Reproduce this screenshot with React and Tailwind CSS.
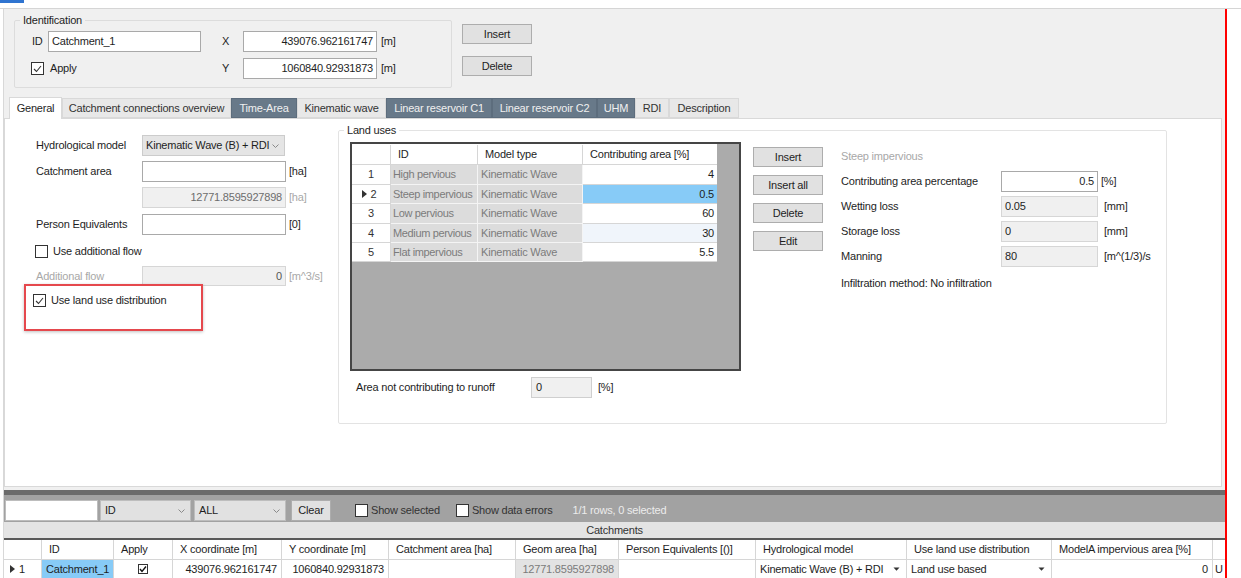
import React from "react";

const Chk = ({ checked }) => (
  <span className="inline-flex w-[13px] h-[13px] shrink-0 items-center justify-center border border-[#333333] bg-white">
    {checked && (
      <svg width="9" height="8" viewBox="0 0 9 8">
        <polyline points="1,4 3.5,6.5 8,1" fill="none" stroke="#333" strokeWidth="1.1" />
      </svg>
    )}
  </span>
);

const Chev = () => (
  <svg width="7" height="4" viewBox="0 0 7 4" className="shrink-0">
    <polyline points="0.5,0.5 3.5,3.5 6.5,0.5" fill="none" stroke="#8a8a8a" strokeWidth="1" />
  </svg>
);

const DownTri = () => (
  <svg width="7" height="4" viewBox="0 0 7 4" className="shrink-0">
    <polygon points="0.5,0.5 6.5,0.5 3.5,3.8" fill="#333" />
  </svg>
);

const RowArrow = () => (
  <svg width="5" height="8" viewBox="0 0 5 8" className="shrink-0">
    <polygon points="0,0 5,4 0,8" fill="#333" />
  </svg>
);

const Btn = ({ children, className = "" }) => (
  <div className={"flex items-center justify-center whitespace-nowrap border border-[#adadad] bg-[#e1e1e1] text-[#1e1e1e] " + className}>
    {children}
  </div>
);

const tabs = [
  ["General", "sel", "w-[53px]"],
  ["Catchment connections overview", "light", "w-[169px]"],
  ["Time-Area", "dark", "w-[66px]"],
  ["Kinematic wave", "light", "w-[89px]"],
  ["Linear reservoir C1", "dark", "w-[106px]"],
  ["Linear reservoir C2", "dark", "w-[105px]"],
  ["UHM", "dark", "w-[38px]"],
  ["RDI", "light", "w-[34px]"],
  ["Description", "light", "w-[70px]"],
];

const landRows = [
  ["1", "High pervious", "4", "", "h-[20px]"],
  ["2", "Steep impervious", "0.5", "sel", "h-[19px]"],
  ["3", "Low pervious", "60", "", "h-[20px]"],
  ["4", "Medium pervious", "30", "hov", "h-[19px]"],
  ["5", "Flat impervious", "5.5", "", "h-[19px]"],
];

const cols = [
  ["", "w-[38px]"],
  ["ID", "w-[72px]"],
  ["Apply", "w-[59px]"],
  ["X coordinate [m]", "w-[109px]"],
  ["Y coordinate [m]", "w-[107px]"],
  ["Catchment area [ha]", "w-[127px]"],
  ["Geom area [ha]", "w-[103px]"],
  ["Person Equivalents [()]", "w-[137px]"],
  ["Hydrological model", "w-[151px]"],
  ["Use land use distribution", "w-[145px]"],
  ["ModelA impervious area [%]", "w-[161px]"],
  ["", "w-[60px]"],
];

export default function App() {
  return (
    <div className="w-[1241px] h-[578px] overflow-hidden bg-white font-['Liberation_Sans',Arial,sans-serif] text-[11px] leading-[13px] tracking-[-0.2px] text-[#1e1e1e]">
      <div className="h-[8px] bg-white">
        <div className="w-[24px] h-[3px] bg-[#2f74d0]" />
      </div>
      <div className="h-px bg-[#d5d5d5]" />
      <div className="flex h-[569px]">
        <div className="w-[3px] bg-white" />
        <div className="w-[1222px] shrink-0 overflow-hidden bg-[#f0f0f0] border-l border-[#d8d8d8] flex flex-col">
          {/* Identification */}
          <div className="h-[88px] flex shrink-0">
            <fieldset className="ml-[10px] mt-[5px] w-[438px] h-[74px] border border-[#dcdcdc] rounded-[2px]">
              <legend className="ml-[5px] px-[3px] leading-[13px]">Identification</legend>
              <div className="mt-[4px] flex items-center h-[21px] pl-[17px]">
                <div className="w-[169px] flex items-center">
                  <span className="w-[16px]">ID</span>
                  <div className="w-[153px] h-[21px] bg-white border border-[#a9a9a9] flex items-center pl-[3px]">Catchment_1</div>
                </div>
                <span className="ml-[21px] w-[21px]">X</span>
                <div className="w-[134px] h-[21px] bg-white border border-[#a9a9a9] flex items-center justify-end pr-[3px]">439076.962161747</div>
                <span className="ml-[4px]">[m]</span>
              </div>
              <div className="mt-[6px] flex items-center h-[21px] pl-[16px]">
                <div className="w-[170px] flex items-center">
                  <Chk checked />
                  <span className="ml-[6px]">Apply</span>
                </div>
                <span className="ml-[21px] w-[21px]">Y</span>
                <div className="w-[134px] h-[21px] bg-white border border-[#a9a9a9] flex items-center justify-end pr-[3px]">1060840.92931873</div>
                <span className="ml-[4px]">[m]</span>
              </div>
            </fieldset>
            <div className="ml-[10px] mt-[15px] flex flex-col">
              <Btn className="w-[70px] h-[20px]">Insert</Btn>
              <Btn className="w-[70px] h-[20px] mt-[12px]">Delete</Btn>
            </div>
          </div>

          {/* Tabs */}
          <div className="h-[21px] flex items-end pl-[5px] shrink-0">
            {tabs.map(([t, kind, w]) =>
              kind === "sel" ? (
                <div key={t} className={w + " h-[22px] mb-[-1px] relative z-10 bg-white border border-b-0 border-[#d9d9d9] flex items-center justify-center whitespace-nowrap"}>{t}</div>
              ) : kind === "dark" ? (
                <div key={t} className={w + " h-[20px] bg-[#687989] border border-[#5d6d7d] text-[#f0f0f0] flex items-center justify-center whitespace-nowrap"}>{t}</div>
              ) : (
                <div key={t} className={w + " h-[20px] bg-[#e8e8e8] border border-[#d9d9d9] text-[#333] flex items-center justify-center whitespace-nowrap"}>{t}</div>
              )
            )}
          </div>

          {/* Tab page */}
          <div className="w-[1218px] h-[369px] shrink-0 bg-white border border-[#d9d9d9] flex">
            {/* left column */}
            <div className="w-[333px] shrink-0 relative pl-[31px] pt-[16px] whitespace-nowrap">
              <div className="flex items-center h-[21px]">
                <span className="w-[106px]">Hydrological model</span>
                <div className="w-[143px] h-[21px] bg-[#e5e5e5] border border-[#cccccc] flex items-center justify-between pl-[3px] pr-[5px]">
                  <span>Kinematic Wave (B) + RDI</span>
                  <Chev />
                </div>
              </div>
              <div className="mt-[5px] flex items-center h-[21px]">
                <span className="w-[106px]">Catchment area</span>
                <div className="w-[144px] h-[21px] bg-white border border-[#a9a9a9]" />
                <span className="ml-[3px]">[ha]</span>
              </div>
              <div className="mt-[5px] flex items-center h-[21px]">
                <span className="w-[106px]" />
                <div className="w-[144px] h-[21px] bg-[#f0f0f0] border border-[#d6d6d6] flex items-center justify-end pr-[3px] text-[#6d6d6d]">12771.8595927898</div>
                <span className="ml-[3px] text-[#a8a8a8]">[ha]</span>
              </div>
              <div className="mt-[6px] flex items-center h-[21px]">
                <span className="w-[106px]">Person Equivalents</span>
                <div className="w-[144px] h-[21px] bg-white border border-[#a9a9a9]" />
                <span className="ml-[3px]">[0]</span>
              </div>
              <div className="mt-[10px] flex items-center h-[13px] ml-[-1px]">
                <Chk />
                <span className="ml-[5px]">Use additional flow</span>
              </div>
              <div className="mt-[8px] flex items-center h-[20px]">
                <span className="w-[106px] text-[#a8a8a8]">Additional flow</span>
                <div className="w-[144px] h-[20px] bg-[#f0f0f0] border border-[#d6d6d6] flex items-center justify-end pr-[3px] text-[#555]">0</div>
                <span className="ml-[3px] text-[#a8a8a8]">[m^3/s]</span>
              </div>
              <div className="mt-[8px] flex items-center h-[13px] ml-[-3px]">
                <Chk checked />
                <span className="ml-[5px]">Use land use distribution</span>
              </div>
              <div className="absolute left-[19px] top-[165px] w-[179px] h-[47px] border-2 border-[#e5484d] shadow-[0_1px_3px_rgba(0,0,0,0.25)]" />
            </div>

            {/* Land uses */}
            <fieldset className="mt-[5px] w-[829px] h-[300px] border border-[#e3e3e3] rounded-[2px] whitespace-nowrap">
              <legend className="ml-[5px] px-[3px] leading-[13px]">Land uses</legend>
              <div className="flex pl-[11px] mt-[5px]">
                <div className="w-[391px] h-[229px] border-2 border-[#454545] bg-[#ababab] shrink-0">
                  <div className="flex h-[21px] pt-px bg-white w-[365px] border-b border-[#d6d6d6]">
                    <div className="w-[39px] border-r border-[#d6d6d6]" />
                    <div className="w-[87px] border-r border-[#d6d6d6] pl-[7px] flex items-center">ID</div>
                    <div className="w-[105px] border-r border-[#d6d6d6] pl-[7px] flex items-center">Model type</div>
                    <div className="w-[134px] pl-[7px] flex items-center">Contributing area [%]</div>
                  </div>
                  {landRows.map(([n, id, v, st, h]) => (
                    <div key={n} className={"flex w-[365px] " + h}>
                      <div className="w-[39px] bg-white border-r border-b border-[#d6d6d6] flex items-center justify-center text-[#333]">
                        {st === "sel" ? (
                          <span className="flex items-center gap-[4px] ml-[-4px]"><RowArrow />{n}</span>
                        ) : (
                          n
                        )}
                      </div>
                      <div className="w-[87px] bg-[#dcdcdc] border-r border-b border-[#f4f4f4] text-[#7b7b7b] pl-[2px] tracking-[-0.35px] flex items-center overflow-hidden">{id}</div>
                      <div className="w-[105px] bg-[#dcdcdc] border-r border-b border-[#f4f4f4] text-[#7b7b7b] pl-[3px] flex items-center">Kinematic Wave</div>
                      <div
                        className={
                          "w-[134px] border-b border-[#d6d6d6] flex items-center justify-end pr-[3px] " +
                          (st === "sel" ? "bg-[#87cbf7]" : st === "hov" ? "bg-[#f0f5fb]" : "bg-white")
                        }
                      >
                        {v}
                      </div>
                    </div>
                  ))}
                </div>
                <div className="ml-[12px] mt-[5px] flex flex-col gap-[8px]">
                  <Btn className="w-[70px] h-[20px]">Insert</Btn>
                  <Btn className="w-[70px] h-[20px]">Insert all</Btn>
                  <Btn className="w-[70px] h-[20px]">Delete</Btn>
                  <Btn className="w-[70px] h-[20px]">Edit</Btn>
                </div>
                <div className="ml-[18px] mt-[8px] flex flex-col">
                  <span className="text-[#a8a8a8]">Steep impervious</span>
                  <div className="mt-[8px] flex items-center h-[21px]">
                    <span className="w-[160px]">Contributing area percentage</span>
                    <div className="w-[97px] h-[21px] bg-white border border-[#a9a9a9] flex items-center justify-end pr-[3px]">0.5</div>
                    <span className="ml-[3px]">[%]</span>
                  </div>
                  <div className="mt-[4px] flex items-center h-[21px]">
                    <span className="w-[160px]">Wetting loss</span>
                    <div className="w-[97px] h-[21px] bg-[#f0f0f0] border border-[#d6d6d6] flex items-center pl-[3px]">0.05</div>
                    <span className="ml-[6px]">[mm]</span>
                  </div>
                  <div className="mt-[4px] flex items-center h-[21px]">
                    <span className="w-[160px]">Storage loss</span>
                    <div className="w-[97px] h-[21px] bg-[#f0f0f0] border border-[#d6d6d6] flex items-center pl-[3px]">0</div>
                    <span className="ml-[6px]">[mm]</span>
                  </div>
                  <div className="mt-[4px] flex items-center h-[21px]">
                    <span className="w-[160px]">Manning</span>
                    <div className="w-[97px] h-[21px] bg-[#f0f0f0] border border-[#d6d6d6] flex items-center pl-[3px]">80</div>
                    <span className="ml-[6px]">[m^(1/3)/s</span>
                  </div>
                  <span className="mt-[10px]">Infiltration method: No infiltration</span>
                </div>
              </div>
              <div className="mt-[6px] ml-[17px] flex items-center h-[21px]">
                <span className="w-[175px]">Area not contributing to runoff</span>
                <div className="w-[61px] h-[21px] bg-[#f0f0f0] border border-[#cfcfcf] flex items-center pl-[4px]">0</div>
                <span className="ml-[6px]">[%]</span>
              </div>
            </fieldset>
          </div>

          {/* Splitter + toolbar */}
          <div className="h-[3px] shrink-0" />
          <div className="h-[5px] shrink-0 bg-[#6b6b6b]" />
          <div className="h-[27px] shrink-0 bg-[#a2a2a2] flex items-end pb-[1px] pl-[1px] whitespace-nowrap">
            <div className="w-[93px] h-[21px] bg-white border border-[#bdbdbd]" />
            <div className="ml-[2px] w-[91px] h-[21px] bg-[#e1e1e1] border border-[#bdbdbd] flex items-center justify-between pl-[4px] pr-[5px]">
              <span>ID</span>
              <Chev />
            </div>
            <div className="ml-[3px] w-[92px] h-[21px] bg-[#e1e1e1] border border-[#bdbdbd] flex items-center justify-between pl-[4px] pr-[5px]">
              <span>ALL</span>
              <Chev />
            </div>
            <Btn className="ml-[5px] w-[40px] h-[21px]">Clear</Btn>
            <div className="ml-[24px] h-[21px] flex items-center">
              <Chk />
              <span className="ml-[3px] text-[#333]">Show selected</span>
            </div>
            <div className="ml-[16px] h-[21px] flex items-center">
              <Chk />
              <span className="ml-[3px] text-[#333]">Show data errors</span>
            </div>
            <div className="ml-[20px] h-[21px] flex items-center text-[#ececec]">1/1 rows, 0 selected</div>
          </div>
          <div className="h-[16px] shrink-0 bg-[#e4e4e4] flex items-center justify-center text-[#333]">Catchments</div>
          <div className="h-[2px] shrink-0 bg-[#595959]" />
          {/* Grid header */}
          <div className="h-[20px] shrink-0 bg-white flex border-b border-[#d6d6d6]">
            {cols.map(([t, w], i) => (
              <div key={i} className={w + " shrink-0 border-r border-[#d6d6d6] pl-[7px] flex items-center whitespace-nowrap overflow-hidden"}>{t}</div>
            ))}
          </div>
          {/* Grid row */}
          <div className="h-[18px] shrink-0 bg-white flex whitespace-nowrap">
            <div className="w-[38px] shrink-0 border-r border-[#d6d6d6] flex items-center pl-[6px] gap-[4px]"><RowArrow />1</div>
            <div className="w-[72px] shrink-0 bg-[#87cbf7] border-r border-[#d6d6d6] flex items-center pl-[4px]">Catchment_1</div>
            <div className="w-[59px] shrink-0 border-r border-[#d6d6d6] flex items-center justify-center">
              <svg width="10" height="10" viewBox="0 0 10 10">
                <rect x="0.5" y="0.5" width="9" height="9" fill="white" stroke="#333" />
                <polyline points="2,5 4,7.5 8,2.5" fill="none" stroke="#111" strokeWidth="1.4" />
              </svg>
            </div>
            <div className="w-[109px] shrink-0 border-r border-[#d6d6d6] flex items-center justify-end pr-[4px]">439076.962161747</div>
            <div className="w-[107px] shrink-0 border-r border-[#d6d6d6] flex items-center justify-end pr-[4px]">1060840.92931873</div>
            <div className="w-[127px] shrink-0 border-r border-[#d6d6d6]" />
            <div className="w-[103px] shrink-0 bg-[#e3e3e3] border-r border-[#d6d6d6] flex items-center justify-end pr-[4px] text-[#7b7b7b]">12771.8595927898</div>
            <div className="w-[137px] shrink-0 border-r border-[#d6d6d6]" />
            <div className="w-[151px] shrink-0 border-r border-[#d6d6d6] flex items-center justify-between pl-[4px] pr-[6px]">
              <span>Kinematic Wave (B) + RDI</span>
              <DownTri />
            </div>
            <div className="w-[145px] shrink-0 border-r border-[#d6d6d6] flex items-center justify-between pl-[4px] pr-[6px]">
              <span>Land use based</span>
              <DownTri />
            </div>
            <div className="w-[161px] shrink-0 border-r border-[#d6d6d6] flex items-center justify-end pr-[4px]">0</div>
            <div className="w-[60px] shrink-0 flex items-center pl-[2px]">U</div>
          </div>
        </div>
        <div className="w-[2px] shrink-0 bg-[#ff0000]" />
        <div className="flex-1 bg-white" />
      </div>
    </div>
  );
}
